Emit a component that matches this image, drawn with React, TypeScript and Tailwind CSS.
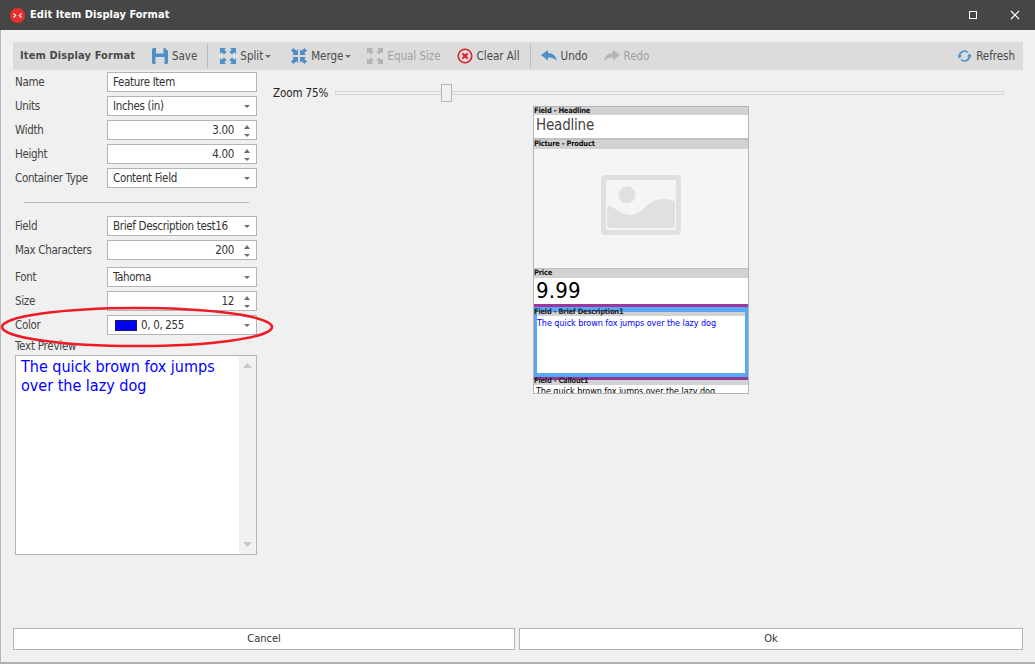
import React from "react";

const font = { fontFamily: '"DejaVu Sans Condensed","DejaVu Sans",sans-serif' };

function Caret({ className = "" }: { className?: string }) {
  return (
    <svg width="6" height="3" viewBox="0 0 6 3" className={className}>
      <path d="M0 0H6L3 3Z" fill="#6f6f6f" />
    </svg>
  );
}

function Spin() {
  return (
    <div className="flex flex-col gap-[5px] ml-[10px] mr-[6px]">
      <svg width="6" height="4" viewBox="0 0 6 4"><path d="M0 4H6L3 0Z" fill="#6f6f6f" /></svg>
      <svg width="6" height="3" viewBox="0 0 6 3"><path d="M0 0H6L3 3Z" fill="#6f6f6f" /></svg>
    </div>
  );
}

function Row({ label, mt = "", children }: { label: string; mt?: string; children: React.ReactNode }) {
  return (
    <div className={`flex items-center h-[20px] ${mt}`}>
      <div className="w-[92px] pt-[1px] text-[#444] text-[11.5px] tracking-[-0.33px] whitespace-nowrap">{label}</div>
      <div className="w-[150px] h-[20px] bg-white border border-[#b4b4b4] flex items-center pl-[5px] pt-[1px] text-[11.5px] tracking-[-0.33px] text-[#333] whitespace-nowrap">
        {children}
      </div>
    </div>
  );
}

function Sel({ label, mt, value, swatch }: { label: string; mt?: string; value: string; swatch?: boolean }) {
  return (
    <Row label={label} mt={mt}>
      {swatch && <div className="w-[22px] h-[11px] bg-[#0000ff] border border-[#1a1a5c] mr-[4px] ml-[2px]" />}
      <span className="flex-1">{value}</span>
      <Caret className="mr-[6px]" />
    </Row>
  );
}

function Num({ label, mt, value }: { label: string; mt?: string; value: string }) {
  return (
    <Row label={label} mt={mt}>
      <span className="flex-1 text-right">{value}</span>
      <Spin />
    </Row>
  );
}

function Sep() {
  return <div className="w-px h-[24px] bg-[#bdbdbd]" />;
}

function Expand({ color }: { color: string }) {
  return (
    <svg width="16" height="16" viewBox="0 0 16 16" fill={color}>
      <path d="M0 0H6L4.3 1.7 6.6 4 4 6.6 1.7 4.3 0 6Z" />
      <path d="M16 0V6L14.3 4.3 12 6.6 9.4 4 11.7 1.7 10 0Z" />
      <path d="M0 16V10L1.7 11.7 4 9.4 6.6 12 4.3 14.3 6 16Z" />
      <path d="M16 16H10L11.7 14.3 9.4 12 12 9.4 14.3 11.7 16 10Z" />
    </svg>
  );
}

function Collapse({ color }: { color: string }) {
  return (
    <svg width="16" height="16" viewBox="0 0 16 16" fill={color}>
      <path d="M7 7H1L2.7 5.3 0 2.6 2.6 0 5.3 2.7 7 1Z" />
      <path d="M9 7V1L10.7 2.7 13.4 0 16 2.6 13.3 5.3 15 7Z" />
      <path d="M7 9V15L5.3 13.3 2.6 16 0 13.4 2.7 10.7 1 9Z" />
      <path d="M9 9H15L13.3 10.7 16 13.4 13.4 16 10.7 13.3 9 15Z" />
    </svg>
  );
}

function Tool({ icon, label, ml, caret, disabled }: { icon: React.ReactNode; label: string; ml: string; caret?: boolean; disabled?: boolean }) {
  return (
    <div className={`flex items-center ${ml}`}>
      {icon}
      <span className={`ml-[4px] pt-[1px] text-[11.5px] tracking-[-0.02px] whitespace-nowrap ${disabled ? "text-[#a0a0a0]" : "text-[#4a4a4a]"}`}>{label}</span>
      {caret && <Caret className="ml-[2px]" />}
    </div>
  );
}

function Toolbar() {
  return (
    <div className="h-[28px] bg-[#dcdcdc] flex items-center pl-[7px] pr-[8px]">
      <span className="pt-[1px] text-[11px] tracking-[0.12px] font-bold text-[#4a4a4a] whitespace-nowrap w-[132px]">Item Display Format</span>
      <Tool
        ml=""
        label="Save"
        icon={
          <svg width="16" height="16" viewBox="0 0 16 16">
            <path d="M1.5 0H13L16 3V14.5A1.5 1.5 0 0 1 14.5 16H1.5A1.5 1.5 0 0 1 0 14.5V1.5A1.5 1.5 0 0 1 1.5 0Z" fill="#4f8fc9" />
            <rect x="4" y="0" width="7.5" height="5.5" fill="#dcdcdc" />
            <rect x="3.5" y="9" width="9" height="7" fill="#dcdcdc" />
          </svg>
        }
      />
      <div className="ml-[10px]"><Sep /></div>
      <Tool ml="ml-[12px]" label="Split" caret icon={<Expand color="#4f8fc9" />} />
      <Tool ml="ml-[20px]" label="Merge" caret icon={<Collapse color="#4f8fc9" />} />
      <Tool ml="ml-[16px]" label="Equal Size" disabled icon={<Expand color="#b4b4b4" />} />
      <Tool
        ml="ml-[16px]"
        label="Clear All"
        icon={
          <svg width="16" height="16" viewBox="0 0 16 16" fill="none">
            <circle cx="8" cy="8" r="6.8" stroke="#e2202c" strokeWidth="1.6" />
            <path d="M5.5 5.5L10.5 10.5M10.5 5.5L5.5 10.5" stroke="#e2202c" strokeWidth="2.2" />
          </svg>
        }
      />
      <div className="ml-[10px]"><Sep /></div>
      <Tool
        ml="ml-[10px]"
        label="Undo"
        icon={
          <svg width="16" height="12" viewBox="0 0 16 12">
            <path d="M0 5L7 0V3C12 3 15 6 16 11 13.5 8 11 7.4 7 7.4V10.5Z" fill="#4f8fc9" />
          </svg>
        }
      />
      <Tool
        ml="ml-[16px]"
        label="Redo"
        disabled
        icon={
          <svg width="16" height="12" viewBox="0 0 16 12">
            <path d="M16 5L9 0V3C4 3 1 6 0 11 2.5 8 5 7.4 9 7.4V10.5Z" fill="#b4b4b4" />
          </svg>
        }
      />
      <div className="ml-auto">
        <Tool
          ml=""
          label="Refresh"
          icon={
            <svg width="15" height="14" viewBox="0 0 15 14" fill="none">
              <path d="M2.5 7A5 5 0 0 1 11 3.5" stroke="#4f8fc9" strokeWidth="1.7" />
              <path d="M12.5 7A5 5 0 0 1 4 10.5" stroke="#4f8fc9" strokeWidth="1.7" />
              <path d="M0 6.5H5L2.5 9.5ZM15 7.5H10L12.5 4.5Z" fill="#4f8fc9" />
            </svg>
          }
        />
      </div>
    </div>
  );
}

function FieldHead({ label, h = "h-[9px]" }: { label: string; h?: string }) {
  return (
    <div className={`${h} shrink-0 bg-[#d2d2d2] text-[7.5px] tracking-[-0.22px] leading-[8px] font-bold text-[#111] whitespace-nowrap overflow-hidden`}>{label}</div>
  );
}

function Preview() {
  return (
    <div className="w-[216px] h-[288px] border border-[#b4b4b4] bg-white flex flex-col overflow-hidden">
      <FieldHead label="Field - Headline" h="h-[8px]" />
      <div className="h-[25px] shrink-0 pl-[2px] text-[15px] tracking-[-0.2px] leading-[20px] text-[#444] border-b-[2px] border-[#c0c0c0]">Headline</div>
      <FieldHead label="Picture - Product" />
      <div className="h-[120px] shrink-0 bg-[#f5f5f5] flex items-center justify-center border-b-[1px] border-[#c0c0c0] pb-[7px]">
        <svg width="80" height="60" viewBox="0 0 80 60">
          <path fillRule="evenodd" d="M4 0H76A4 4 0 0 1 80 4V56A4 4 0 0 1 76 60H4A4 4 0 0 1 0 56V4A4 4 0 0 1 4 0ZM7 5A2 2 0 0 0 5 7V53A2 2 0 0 0 7 55H73A2 2 0 0 0 75 53V7A2 2 0 0 0 73 5Z" fill="#e0e0e0" />
          <circle cx="26" cy="20" r="8.5" fill="#e0e0e0" />
          <path d="M7 31C11 29 18 40 30 40 42 40 46 24 62 24 68 24 73 25 74 27V50A3 3 0 0 1 71 53H9A3 3 0 0 1 6 50V33Z" fill="#e0e0e0" />
        </svg>
      </div>
      <FieldHead label="Price" />
      <div className="h-[26px] shrink-0 pl-[2px] text-[22px] tracking-[0.2px] leading-[26px] text-black">9.99</div>
      <div className="h-[3px] shrink-0 bg-[#a0359c]" />
      <div className="h-[70px] shrink-0 bg-[#5aa8f5] pt-[5px] px-[3px] pb-[4px] relative">
        <div className="h-full bg-white flex flex-col">
          <div className="h-[4px] shrink-0 bg-[#d2d2d2]" />
          <div className="pt-[1px] text-[9px] tracking-[-0.07px] leading-[13px] text-[#0000ff] whitespace-nowrap">The quick brown fox jumps over the lazy dog</div>
        </div>
        <div className="absolute left-0 top-[1px] text-[7.5px] tracking-[-0.22px] leading-[8px] font-bold text-[#222] whitespace-nowrap">Field - Brief Description1</div>
      </div>
      <div className="h-[3px] shrink-0 bg-[#8f3a96]" />
      <div className="h-[5px] shrink-0 bg-[#d2d2d2] relative">
        <div className="absolute left-0 top-[-3px] text-[7.5px] tracking-[-0.22px] leading-[8px] font-bold text-[#222] whitespace-nowrap">Field - Callout1</div>
      </div>
      <div className="h-[8px] shrink-0 overflow-hidden pl-[2px] pt-[1px] text-[9px] tracking-[-0.07px] leading-[11px] text-black whitespace-nowrap">The quick brown fox jumps over the lazy dog</div>
    </div>
  );
}

export default function App() {
  return (
    <div style={font} className="w-[1035px] h-[664px] bg-[#f0f0f0] flex flex-col overflow-hidden relative">
      <div className="h-[30px] shrink-0 bg-[#464646] flex items-center pl-[10px] text-white">
        <svg width="15" height="15" viewBox="0 0 15 15">
          <circle cx="7.5" cy="7.5" r="7.5" fill="#e8302a" />
          <path d="M3.5 5.5L5.7 7.5 3.5 9.5M11.5 5.5L9.3 7.5 11.5 9.5" stroke="#fff" strokeWidth="1.1" fill="none" />
        </svg>
        <span className="ml-[5px] pt-[1px] text-[11px] tracking-[0.05px] font-bold whitespace-nowrap">Edit Item Display Format</span>
        <div className="ml-auto flex items-center">
          <div className="w-[8px] h-[8px] border border-white mr-[33px]" />
          <svg width="10" height="10" viewBox="0 0 10 10" className="mr-[15px]">
            <path d="M1 1L9 9M9 1L1 9" stroke="#fff" strokeWidth="1.2" />
          </svg>
        </div>
      </div>

      <div className="flex-1 flex flex-col border-l border-[#b8b8b8] border-b-[2px] border-b-[#b0b0b0] pl-[12px] pr-[12px] pt-[12px] pb-[12px] min-h-0">
        <Toolbar />
        <div className="flex-1 flex min-h-0">
          <div className="w-[244px] shrink-0 pl-[2px] pt-[2px] flex flex-col">
            <Row label="Name" mt=""><span>Feature Item</span></Row>
            <Sel label="Units" mt="mt-[4px]" value="Inches (in)" />
            <Num label="Width" mt="mt-[4px]" value="3.00" />
            <Num label="Height" mt="mt-[4px]" value="4.00" />
            <Sel label="Container Type" mt="mt-[4px]" value="Content Field" />
            <div className="h-px bg-[#b8b8b8] ml-[9px] mr-[8px] mt-[14px] mb-[13px]" />
            <Sel label="Field" value="Brief Description test16" />
            <Num label="Max Characters" mt="mt-[4px]" value="200" />
            <Sel label="Font" mt="mt-[7px]" value="Tahoma" />
            <Num label="Size" mt="mt-[4px]" value="12" />
            <Sel label="Color" mt="mt-[4px]" value="0, 0, 255" swatch />
            <div className="pt-[1px] text-[11.5px] tracking-[-0.25px] leading-[14px] text-[#444] mt-[3px]">Text Preview</div>
            <div className="mt-[2px] w-[242px] h-[200px] bg-white border border-[#b4b4b4] flex">
              <div className="flex-1 pl-[5px] pt-[1px] text-[16px] leading-[19px] text-[#0000ff]">The quick brown fox jumps over the lazy dog</div>
              <div className="w-[17px] bg-[#f1f1f1] flex flex-col justify-between items-center py-[7px]">
                <svg width="9" height="5" viewBox="0 0 9 5"><path d="M0 5H9L4.5 0Z" fill="#c8c8c8" /></svg>
                <svg width="9" height="5" viewBox="0 0 9 5"><path d="M0 0H9L4.5 5Z" fill="#c8c8c8" /></svg>
              </div>
            </div>
          </div>
          <div className="flex-1 flex flex-col pl-[16px] pt-[14px] items-stretch">
            <div className="flex items-center h-[18px]">
              <span className="pt-[1px] text-[11.5px] tracking-[-0.1px] text-[#222] w-[62px] whitespace-nowrap">Zoom 75%</span>
              <div className="w-[669px] h-[4px] bg-[#f0f0f0] border border-[#d4d4d4] relative">
                <div className="absolute left-[105px] top-[-8px] w-[11px] h-[18px] bg-[#f0f0f0] border border-[#b4b4b4]" />
              </div>
            </div>
            <div className="mt-[4px] ml-[260px]">
              <Preview />
            </div>
          </div>
        </div>
        <div className="flex gap-[4px] h-[22px] shrink-0">
          <div className="w-[502px] pt-[1px] bg-white border border-[#b4b4b4] flex items-center justify-center text-[11px] text-[#333]">Cancel</div>
          <div className="w-[504px] pt-[1px] bg-white border border-[#b4b4b4] flex items-center justify-center text-[11px] text-[#333]">Ok</div>
        </div>
      </div>

      <svg width="280" height="50" viewBox="0 0 280 50" className="absolute left-0 top-[303px] pointer-events-none">
        <ellipse cx="137" cy="24" rx="135" ry="19" fill="none" stroke="#ee1c25" strokeWidth="2.6" />
      </svg>
    </div>
  );
}
